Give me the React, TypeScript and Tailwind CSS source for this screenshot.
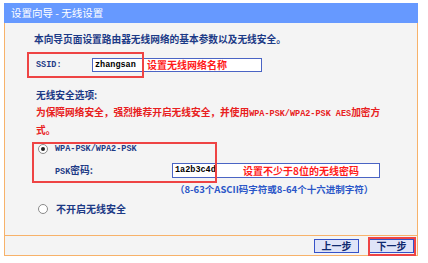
import React from "react";

const cjk = { fontFamily: '"Noto Sans CJK SC", "Noto Sans", sans-serif' };
const mono = { fontFamily: '"Liberation Mono", "Noto Sans CJK SC", monospace' };

function Radio({ checked }: { checked?: boolean }) {
  return (
    <div className="w-[10px] h-[10px] rounded-full border border-[#8a8a8a] bg-white flex items-center justify-center shrink-0">
      {checked && <div className="w-[4px] h-[4px] rounded-full bg-[#222]" />}
    </div>
  );
}

export default function App() {
  return (
    <div className="w-[428px] h-[263px] bg-white pt-[3px] pl-[4px] overflow-hidden" style={cjk}>
      <div className="w-[414px] flex flex-col">
        <div className="h-[20px] bg-[#6699ff] flex items-center pl-[7px] text-white text-[10.5px] leading-[20px]">
          设置向导 - 无线设置
        </div>
        <div className="border-x border-b border-[#f7b26a] bg-[#f4f4f4] flex flex-col">
          <div className="h-[212px] flex flex-col pt-[10px] text-[#1c3a86] text-[9.7px]">
            <div className="pl-[29px] leading-[12px] font-bold">本向导页面设置路由器无线网络的基本参数以及无线安全。</div>

            <div className="relative ml-[22px] mt-[7px] h-[26px] flex items-center pl-[9px]">
              <span className="w-[56px] font-bold text-[8.5px]" style={mono}>SSID:</span>
              <div className="w-[170px] h-[14px] bg-white border border-[#4a64c4] flex items-center">
                <span className="w-[54px] pl-[2px] text-black font-bold text-[8.5px]" style={mono}>zhangsan</span>
                <span className="text-[#ff1a1a] font-bold text-[10px] leading-[12px]">设置无线网络名称</span>
              </div>
              <div className="absolute left-0 top-0 w-[117px] h-[26px] border-2 border-[#ee4444]" />
            </div>

            <div className="pl-[31px] mt-[11px] leading-[12px] font-bold">无线安全选项:</div>
            <div className="pl-[31px] mt-[3px] leading-[16px] text-[#e82020] font-bold">
              为保障网络安全，强烈推荐开启无线安全，并使用<span className="text-[8.5px]" style={mono}>WPA-PSK/WPA2-PSK AES</span>加密方
              <br />
              式。
            </div>

            <div className="relative ml-[27px] mt-[4px] flex flex-col">
              <div className="h-[14px] flex items-center pl-[6px]">
                <Radio checked />
                <span className="ml-[7px] font-bold text-[8.5px]" style={mono}>WPA-PSK/WPA2-PSK</span>
              </div>
              <div className="mt-[7px] h-[15px] flex items-center pl-[23px]">
                <span className="w-[117px] font-bold leading-[12px]">
                  <span className="text-[8.5px]" style={mono}>PSK</span>密码:
                </span>
                <div className="w-[208px] h-[15px] bg-white border border-[#4a64c4] flex items-center">
                  <span className="w-[70px] pl-[2px] text-black font-bold text-[8.5px]" style={mono}>1a2b3c4d</span>
                  <span className="text-[#ff1a1a] font-bold text-[10px] leading-[12px]">设置不少于8位的无线密码</span>
                </div>
              </div>
              <div className="absolute left-0 top-0 w-[185px] h-[41px] border-2 border-[#ee4444]" />
            </div>

            <div className="pl-[170px] mt-[5px] leading-[12px] text-[#2a56c8] font-bold text-[9.5px]">
              （8-63个ASCII码字符或8-64个十六进制字符）
            </div>

            <div className="mt-[7px] h-[14px] flex items-center pl-[33px]">
              <Radio />
              <span className="ml-[8px] font-bold leading-[12px] text-[10px]">不开启无线安全</span>
            </div>
          </div>
          <div className="h-[20px] border-t border-[#f7b26a] flex justify-end items-start pt-[3px] pr-[3px] gap-[10px]">
            <button className="w-[45px] h-[14px] bg-[#dfe4f8] border border-[#3652c8] text-[#102a70] text-[10px] leading-[12px] font-bold flex items-center justify-center">
              上一步
            </button>
            <div className="relative">
              <button className="w-[45px] h-[14px] bg-[#dfe4f8] border border-[#3652c8] text-[#102a70] text-[10px] leading-[12px] font-bold flex items-center justify-center">
                下一步
              </button>
              <div className="absolute left-[-1px] top-[-2px] w-[48px] h-[19px] border-2 border-[#ee4444]" />
            </div>
          </div>
        </div>
      </div>
    </div>
  );
}
